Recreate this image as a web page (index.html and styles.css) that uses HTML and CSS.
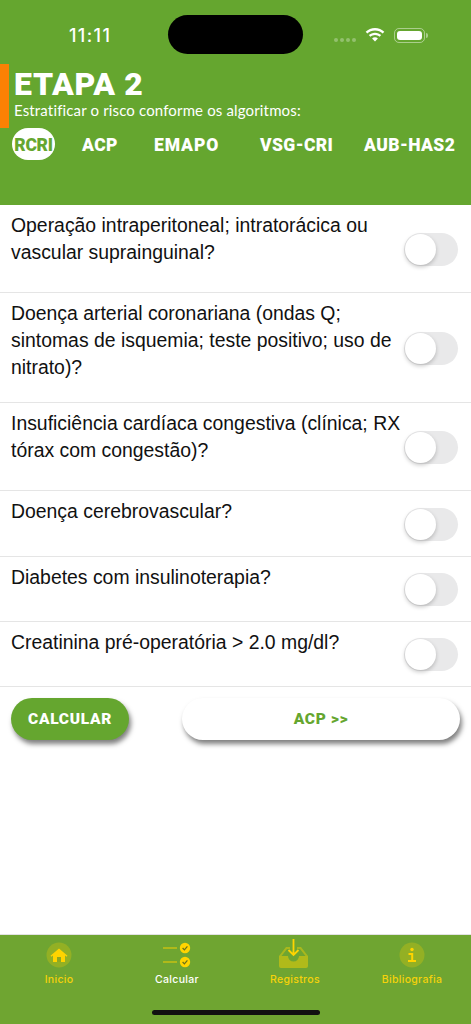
FILE: index.html
```html
<!DOCTYPE html>
<html lang="pt">
<head>
<meta charset="utf-8">
<title>Etapa 2</title>
<link rel="stylesheet" href="styles.css">
</head>
<body>
<div class="screen">
  <header class="header">
    <div class="status">
      <span class="time">11:11</span>
      <span class="island"></span>
      <span class="status-icons">
        <span class="dots"><i></i><i></i><i></i><i></i></span>
        <svg class="wifi" width="20" height="15" viewBox="0 0 20 15"><path d="M10 2.400c3 0 5.700 1.200 7.700 3.100l1.600-1.700C16.900 1.500 13.600 0 10 0S3.100 1.500.7 3.800l1.600 1.700C4.300 3.600 7 2.400 10 2.400z" fill="#fff"/><path d="M10 7c1.800 0 3.400.7 4.600 1.800l1.600-1.700C14.600 5.600 12.400 4.700 10 4.700S5.400 5.600 3.800 7.100l1.600 1.700C6.600 7.700 8.200 7 10 7z" fill="#fff"/><path d="M10 9.300c-1.100 0-2.100.4-2.900 1.100L10 13.600l2.900-3.200C12.100 9.700 11.100 9.300 10 9.300z" fill="#fff"/></svg>
        <span class="battery"><span class="battery-fill"></span></span>
        <span class="battery-nub"></span>
      </span>
    </div>
    <div class="title-block">
      <h1 class="title">ETAPA 2</h1>
      <p class="subtitle">Estratificar o risco conforme os algoritmos:</p>
    </div>
    <nav class="tabs">
      <span class="tab tab-active">RCRI</span>
      <span class="tab tab-acp">ACP</span>
      <span class="tab tab-emapo">EMAPO</span>
      <span class="tab tab-vsg">VSG-CRI</span>
      <span class="tab tab-aub">AUB-HAS2</span>
    </nav>
    <span class="accent"></span>
  </header>

  <main class="list">
    <div class="row row-a"><p>Operação intraperitoneal; intratorácica ou vascular suprainguinal?</p><span class="switch"><span class="knob"></span></span></div>
    <div class="row row-b"><p>Doença arterial coronariana (ondas Q; sintomas de isquemia; teste positivo; uso de nitrato)?</p><span class="switch"><span class="knob"></span></span></div>
    <div class="row row-c"><p>Insuficiência cardíaca congestiva (clínica; RX tórax com congestão)?</p><span class="switch"><span class="knob"></span></span></div>
    <div class="row row-d1"><p>Doença cerebrovascular?</p><span class="switch"><span class="knob"></span></span></div>
    <div class="row row-d"><p>Diabetes com insulinoterapia?</p><span class="switch"><span class="knob"></span></span></div>
    <div class="row row-d"><p>Creatinina pré-operatória &gt; 2.0 mg/dl?</p><span class="switch"><span class="knob"></span></span></div>
  </main>

  <div class="actions">
    <button class="btn btn-calc">CALCULAR</button>
    <button class="btn btn-next">ACP &gt;&gt;</button>
  </div>

  <footer class="tabbar">
    <div class="item">
      <svg width="40" height="40" viewBox="0 0 40 40"><circle cx="20" cy="20" r="12.500" fill="#ffd400" fill-opacity=".25"/><path d="M20 13.500l8.500 7.200-.9 1-1.600-1.300V27H14v-6.600l-1.600 1.300-.9-1z" fill="#ffd400"/><rect x="18" y="22" width="4" height="5" fill="#8fa820"/></svg>
      <span class="label">Inicio</span>
    </div>
    <div class="item">
      <svg width="40" height="40" viewBox="0 0 40 40"><path d="M6 13h14M6 27h14" stroke="#ffd400" stroke-opacity=".6" stroke-width="1.500"/><circle cx="28" cy="13" r="5.200" fill="#ffd400"/><circle cx="28" cy="27" r="5.200" fill="#ffd400"/><path d="M25.600 13l1.800 1.900 3-3.600M25.600 27l1.800 1.900 3-3.600" fill="none" stroke="#66701a" stroke-width="1.200"/></svg>
      <span class="label label-on">Calcular</span>
    </div>
    <div class="item">
      <svg width="40" height="40" viewBox="0 0 40 40"><path d="M4 21l7-9h4v2h-3l-5.500 7z" fill="#ffd400" fill-opacity=".4"/><path d="M33 21l-7-9h-4v2h3l5.500 7z" fill="#ffd400" fill-opacity=".4"/><path d="M4 21h9a5.500 5.500 0 0 0 11 0h9v10a2 2 0 0 1-2 2H6a2 2 0 0 1-2-2z" fill="#ffd400" fill-opacity=".45"/><path d="M18.500 4v16M13.500 15l5 5 5-5" fill="none" stroke="#ffd400" stroke-width="1.800"/></svg>
      <span class="label">Registros</span>
    </div>
    <div class="item">
      <svg width="40" height="40" viewBox="0 0 40 40"><circle cx="20" cy="20" r="12.500" fill="#ffd400" fill-opacity=".25"/><circle cx="20" cy="14.500" r="1.700" fill="#ffd400"/><path d="M16.500 19h3.700v7M16 26h8" fill="none" stroke="#ffd400" stroke-width="2"/></svg>
      <span class="label">Bibliografia</span>
    </div>
    <span class="home"></span>
  </footer>
</div>
</body>
</html>
```
FILE: styles.css
```css
* { box-sizing: border-box; }
html, body { margin: 0; padding: 0; }
body { background: #fff; font-family: "Liberation Sans", Arial, sans-serif; }
.screen { width: 471px; height: 1024px; display: flex; flex-direction: column; overflow: hidden; position: relative; }

.header { height: 205px; background: #65a62f; position: relative; flex: none; color: #fff; }
.status { height: 64px; position: relative; display: flex; }
.time { position: absolute; left: 69px; top: 25px; font-size: 18px; line-height: 22px; letter-spacing: 1.400px; color: #fff; font-family: Inter, sans-serif; font-weight: 500; }
.island { position: absolute; left: 168px; top: 15px; width: 135px; height: 39px; border-radius: 20px; background: #000; }
.status-icons { position: absolute; left: 334px; top: 27px; display: flex; align-items: center; }
.dots { display: flex; gap: 2px; margin-right: 9px; margin-top: 10px; }
.dots i { width: 4px; height: 4px; border-radius: 50%; background: rgba(255,255,255,.3); display: block; }
.wifi { margin-top: 1px; margin-right: 9px; }
.battery { width: 31px; height: 15px; border: 1px solid rgba(255,255,255,.45); border-radius: 5px; padding: 2px; display: block; }
.battery-fill { display: block; height: 9px; background: #fff; border-radius: 3px; }
.battery-nub { width: 2px; height: 5px; margin-left: 1px; background: rgba(255,255,255,.45); border-radius: 0 2px 2px 0; display: block; }

.title-block { padding-left: 14px; }
.title { margin: 0; font-family: Roboto, sans-serif; font-weight: 900; font-size: 32px; line-height: 40px; letter-spacing: .7px; color: #fff; }
.subtitle { margin: -3px 0 0; font-family: Lato, sans-serif; font-weight: 400; font-size: 15px; line-height: 18px; letter-spacing: .15px; color: #fff; }

.tabs { position: relative; height: 32px; margin-top: 9px; }
.tab { position: absolute; top: 0; font-family: Roboto, sans-serif; font-weight: 900; font-size: 17.500px; line-height: 34px; letter-spacing: .4px; color: #fff; }
.tab-active { left: 12px; width: 43px; height: 32px; border-radius: 16px; background: #fff; color: #65a62f; text-align: center; letter-spacing: -.3px; }
.tab-acp { left: 82px; }
.tab-emapo { left: 154px; letter-spacing: .9px; }
.tab-vsg { left: 260px; }
.tab-aub { left: 364px; }
.accent { position: absolute; left: 0; top: 64px; width: 9px; height: 64px; background: #fb8104; }

.list { flex: none; }
.row { display: flex; justify-content: space-between; align-items: center; padding: 7px 11px 0; border-bottom: 1px solid #e5e5e5; position: relative; }
.row p { margin: 0; width: 392px; font-size: 19.400px; line-height: 27px; color: #111; align-self: flex-start; }
.row-a { height: 88px; }
.row-b { height: 110px; }
.row-c { height: 88px; }
.row-d1 { height: 66px; }
.row-d { height: 65px; }
.switch { width: 54px; height: 33px; border-radius: 17px; background: #e9e9ea; display: block; flex: none; padding: 1px; position: relative; left: -2px; margin-top: -6px; }
.knob { display: block; width: 31px; height: 31px; border-radius: 50%; background: #fff; box-shadow: 0 2px 4px rgba(0,0,0,.22); }

.actions { display: flex; justify-content: space-between; padding: 11px 11px 0; align-items: flex-start; }
.btn { border: 0; height: 42px; border-radius: 21px; font-family: Roboto, sans-serif; font-weight: 900; font-size: 15.500px; letter-spacing: .7px; padding: 0; box-shadow: 2px 4px 5px rgba(0,0,0,.5); }
.btn-calc { width: 118px; background: #65a62f; color: #fff; }
.btn-next { width: 278px; background: #fff; color: #65a62f; }

.tabbar { position: absolute; left: 0; right: 0; bottom: 0; height: 90px; border-top: 1px solid #e2e2e2; background: #6fa531; display: grid; grid-template-columns: 118px 118px 118px 116px; }
.item { display: flex; flex-direction: column; align-items: center; height: 60px; }
.item svg { display: block; margin-bottom: -2px; }
.label { font-size: 10.500px; line-height: 14px; color: #f5d20a; letter-spacing: .3px; font-family: Inter, sans-serif; font-weight: 500; }
.label-on { color: #fff; }
.home { position: absolute; left: 152px; bottom: 9px; width: 168px; height: 5px; border-radius: 3px; background: #111; }
```
